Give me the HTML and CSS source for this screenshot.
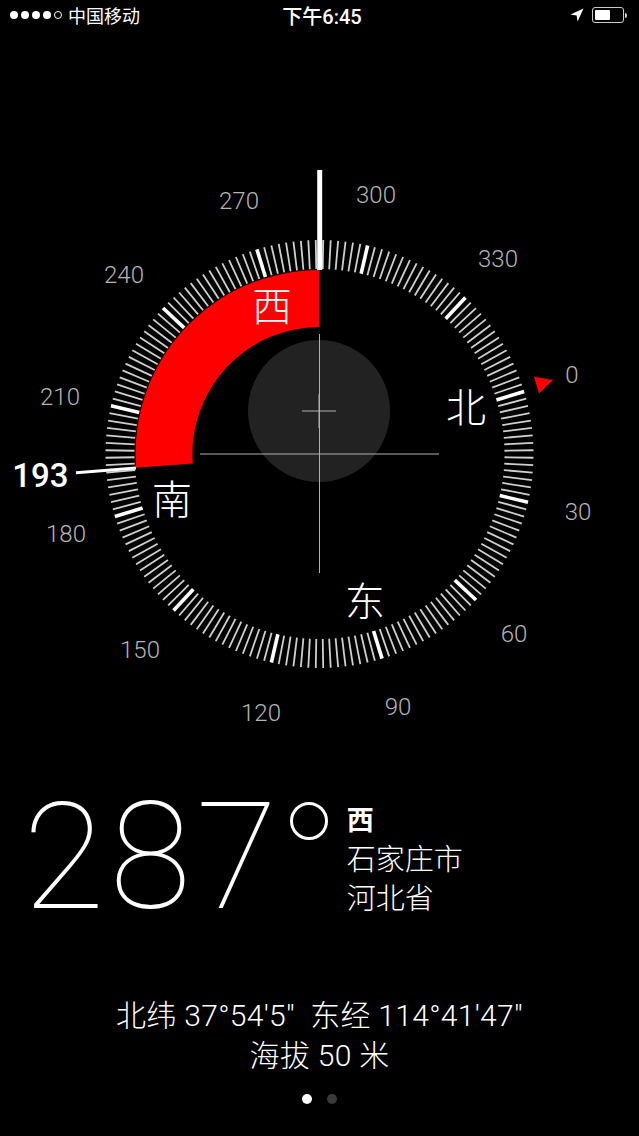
FILE: index.html

```html
<!DOCTYPE html>
<html lang="zh-CN">
<head>
  <meta charset="UTF-8" />
  <meta name="viewport" content="width=device-width, initial-scale=1.0" />
  <title>指南针</title>
  <link rel="stylesheet" href="styles.css">
</head>
<body>
  <div class="status-bar">
    <div class="status-left">
      <div class="signal">
        <span class="dot"></span><span class="dot"></span><span class="dot"></span><span class="dot"></span><span class="dot dot-empty"></span>
      </div>
      <span>中国移动</span>
    </div>
    <div class="status-time">下午6:45</div>
    <div class="status-right">
      <svg class="location" viewBox="0 0 14 14"><path d="M13.5 0.5 L0.5 6.6 L6.6 7.4 L7.6 13.5 Z" /></svg>
      <div class="battery"><div class="battery-fill"></div></div>
      <div class="battery-nub"></div>
    </div>
  </div>

  <svg class="dial" viewBox="0 32 639 738">
    <!-- tick marks are added by compass.js -->
    <g id="ticks"></g>

    <path class="sweep" d="M319.5 270 A184 184 0 0 0 136 467.8 L192.8 463.4 A127 127 0 0 1 319.5 327 Z" />

    <circle class="level" cx="319" cy="411" r="71" />
    <line class="cross" x1="200" y1="454" x2="439" y2="454" />
    <line class="cross" x1="319.5" y1="334" x2="319.5" y2="573" />
    <line class="cross" x1="302" y1="411" x2="336" y2="411" />
    <line class="cross" x1="319" y1="394" x2="319" y2="428" />

    <line class="needle" x1="319.7" y1="170" x2="319.7" y2="270" />
    <line class="bearing" x1="76" y1="472.7" x2="136" y2="468" />
    <polygon class="north" points="534,376.7 553,380 539,393.5" />

    <text class="deg" x="239" y="201">270</text>
    <text class="deg" x="376" y="195">300</text>
    <text class="deg" x="498" y="259">330</text>
    <text class="deg" x="572" y="375">0</text>
    <text class="deg" x="578" y="512">30</text>
    <text class="deg" x="514" y="634">60</text>
    <text class="deg" x="398" y="707">90</text>
    <text class="deg" x="261" y="713">120</text>
    <text class="deg" x="140" y="650">150</text>
    <text class="deg" x="66" y="534">180</text>
    <text class="deg" x="60" y="397">210</text>
    <text class="deg" x="124" y="275">240</text>

    <text class="card" x="272" y="307">西</text>
    <text class="card" x="466" y="408">北</text>
    <text class="card" x="365" y="602">东</text>
    <text class="card" x="172" y="500">南</text>

    <text class="mark" x="40.5" y="475">193</text>
  </svg>

  <div class="reading">
    <div class="heading">287<span class="ring"></span></div>
    <div class="place">
      <div class="place-dir">西</div>
      <div>石家庄市</div>
      <div>河北省</div>
    </div>
  </div>

  <div class="coords">
    <div class="coords-line">北纬 37°54′5″  东经 114°41′47″</div>
    <div class="coords-line">海拔 50 米</div>
  </div>

  <div class="pager">
    <span class="page page-on"></span>
    <span class="page"></span>
  </div>

  <script src="compass.js"></script>
</body>
</html>
```

FILE: styles.css

```css
body {
  font-family: Roboto, "Noto Sans CJK SC", sans-serif;
  background-color: #000;
  color: #fff;
  margin: 0;
  width: 639px;
  height: 1136px;
  overflow: hidden;
}
.status-bar {
  display: grid;
  grid-template-columns: 1fr auto 1fr;
  align-items: center;
  height: 32px;
  padding: 0 12px 2px 10px;
  font-size: 18px;
  box-sizing: border-box;
}
.status-left {
  display: flex;
  align-items: center;
  gap: 6px;
}
.signal {
  display: flex;
  gap: 3px;
}
.dot {
  width: 8px;
  height: 8px;
  border-radius: 50%;
  background-color: #fff;
}
.dot-empty {
  box-sizing: border-box;
  background-color: transparent;
  border: 1px solid #fff;
}
.status-time {
  padding-left: 7px;
  font-size: 20px;
  font-weight: 500;
}
.status-right {
  display: flex;
  align-items: center;
  justify-content: flex-end;
}
.location {
  width: 14px;
  height: 14px;
  margin-right: 8px;
  fill: #fff;
}
.battery {
  box-sizing: border-box;
  width: 32px;
  height: 16px;
  padding: 2px;
  border: 1px solid #ccc;
  border-radius: 3px;
}
.battery-fill {
  width: 15px;
  height: 100%;
  background-color: #fff;
  border-radius: 1px;
}
.battery-nub {
  width: 2px;
  height: 5px;
  margin-left: 1px;
  background-color: #ccc;
  border-radius: 0 2px 2px 0;
}

.dial {
  display: block;
  width: 639px;
  height: 738px;
}
.tick {
  stroke: #cfcfcf;
  stroke-width: 1.8;
}
.tick-major {
  stroke: #fff;
  stroke-width: 3.6;
}
.sweep {
  fill: #f00;
}
.level {
  fill: #222;
}
.cross {
  stroke: #b0b0b0;
  stroke-width: 1;
}
.needle {
  stroke: #fff;
  stroke-width: 5;
}
.bearing {
  stroke: #fff;
  stroke-width: 3;
}
.north {
  fill: #f00;
}
.deg, .card, .mark {
  text-anchor: middle;
  dominant-baseline: central;
}
.deg {
  fill: #b4b4b4;
  font-size: 24px;
  font-weight: 300;
}
.card {
  fill: #fff;
  font-size: 40px;
  font-weight: 300;
}
.mark {
  fill: #fff;
  font-size: 33px;
  font-weight: 500;
}

.reading {
  display: flex;
  height: 178px;
  padding-left: 23px;
}
.heading {
  display: flex;
  font-size: 149px;
  font-weight: 100;
  letter-spacing: 5px;
  line-height: 120px;
  margin-top: 27px;
}
.ring {
  box-sizing: border-box;
  width: 38px;
  height: 38px;
  margin: 5px 0 0 7px;
  border: 3px solid #fff;
  border-radius: 50%;
}
.place {
  margin: 31px 0 0 19px;
  font-size: 29px;
  font-weight: 300;
  line-height: 39px;
}
.place-dir {
  font-size: 27px;
  font-weight: 700;
  line-height: 40px;
}

.coords {
  margin-top: 48px;
  font-size: 30px;
  font-weight: 300;
  line-height: 40px;
  text-align: center;
}
.coords-line {
  white-space: pre;
  letter-spacing: 0.3px;
}
.pager {
  display: flex;
  justify-content: center;
  gap: 15px;
  margin-top: 18px;
}
.page {
  width: 10px;
  height: 10px;
  border-radius: 50%;
  background-color: #3a3a3a;
}
.page-on {
  background-color: #fff;
}
```

FILE: compass.js

```js
// Draws the ring of ticks, one every 2 degrees, turned to the current heading
const heading = 287;
const cx = 319.5, cy = 454;
const ticks = document.getElementById('ticks');

for (let deg = 0; deg < 360; deg += 2) {
  const a = (deg - heading - 90) * Math.PI / 180;
  const line = document.createElementNS('http://www.w3.org/2000/svg', 'line');
  line.setAttribute('x1', cx + 185 * Math.cos(a));
  line.setAttribute('y1', cy + 185 * Math.sin(a));
  line.setAttribute('x2', cx + 214 * Math.cos(a));
  line.setAttribute('y2', cy + 214 * Math.sin(a));
  line.setAttribute('class', deg % 30 === 0 ? 'tick tick-major' : 'tick');
  ticks.appendChild(line);
}
```
